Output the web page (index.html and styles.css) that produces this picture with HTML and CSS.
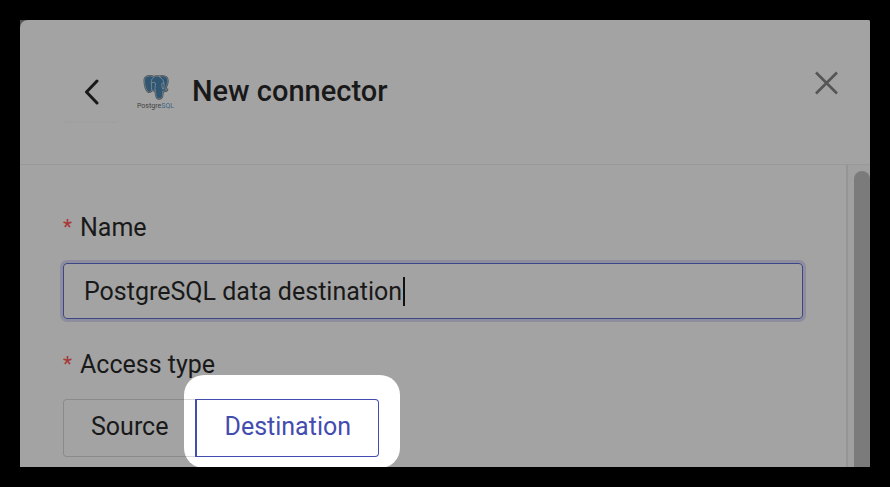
FILE: index.html
```html
<!DOCTYPE html>
<html lang="en">
<head>
<meta charset="utf-8">
<title>New connector</title>
<link rel="stylesheet" href="styles.css">
</head>
<body>
<main class="panel">
  <header class="header">
    <button class="back" type="button" aria-label="Back">
      <svg width="16" height="26" viewBox="0 0 16 26" fill="none" stroke="currentColor" stroke-width="3" stroke-linecap="round" stroke-linejoin="round"><path d="M14 2 3.500 13 14 24"/></svg>
    </button>
    <svg class="logo" width="40" height="36" viewBox="0 0 40 36" role="img" aria-label="PostgreSQL">
      <path d="M18 3C14 1 9 2 8.500 6c0 5 1.500 10 4 12 1.500.5 2.500-1 3.500-2 1 .7 2 .8 3.500.5.3 3 0 7 2.300 8 3 .7 4.700-1 4.700-4l.3-3.500c2 .3 4.200-.1 4.500-1.500l-2.500-.3C31 12 33 6 30.500 3.500 28 1.300 25 1.800 23 2.500 21 2 19.500 2 18 3z" stroke="#4a4c4e" stroke-width="2" stroke-linejoin="round"/>
      <path d="M18 3C14 1 9 2 8.500 6c0 5 1.500 10 4 12 1.500.5 2.500-1 3.500-2 1 .7 2 .8 3.500.5.3 3 0 7 2.300 8 3 .7 4.700-1 4.700-4l.3-3.500c2 .3 4.200-.1 4.500-1.500l-2.500-.3C31 12 33 6 30.500 3.500 28 1.300 25 1.800 23 2.500 21 2 19.500 2 18 3z" fill="#2f5672" stroke="#8a9296" stroke-width=".6"/>
      <path d="M18 3c-3 2-3 5-2.500 8 .4 2-.5 4 .5 5M15.500 9c2-1.200 4-1 4 1 0 2.500-1 4-.3 6M23 2.500c3 1.500 4.700 4 5 7-1.500-.8-2.500-.3-2.400 1 .2 2 .8 3.500 1.300 5M28 9.500c.5 2.500-.2 4-.8 5.500" fill="none" stroke="#8a9296" stroke-width=".8"/>
      <text class="logo-text" x="1" y="34" fill="#414141">Postgre<tspan fill="#3f6480">SQL</tspan></text>
    </svg>
    <h1 class="title">New connector</h1>
    <button class="close" type="button" aria-label="Close">
      <svg width="24" height="24" viewBox="0 0 24 24" fill="none" stroke="currentColor" stroke-width="2.600"><path d="m2 1.500 21 21m0-21-21 21"/></svg>
    </button>
  </header>
  <div class="content">
    <form class="form">
      <label class="label" for="name"><span class="required">*</span>Name</label>
      <div class="field">
        <input class="input" id="name" type="text" value="PostgreSQL data destination">
        <span class="caret"></span>
      </div>
      <div class="label" id="access"><span class="required">*</span>Access type</div>
      <div class="choices" role="group" aria-labelledby="access">
        <button class="choice" type="button">Source</button>
        <div class="highlight"><button class="choice selected" type="button" aria-pressed="true">Destination</button></div>
      </div>
    </form>
    <div class="scrollbar"><div class="thumb"></div></div>
  </div>
</main>
</body>
</html>
```
FILE: styles.css
```css
* {
  box-sizing: border-box;
}

body {
  margin: 0;
  padding: 20px;
  background: #000;
  color: #191919;
  font: 25px/32px Roboto, sans-serif;
}

button,
input {
  margin: 0;
  font: inherit;
  color: inherit;
}

.panel {
  display: flex;
  flex-direction: column;
  height: calc(100vh - 40px);
  overflow: hidden;
  background: #555;
}

.header {
  display: flex;
  flex: none;
  align-items: center;
  height: 145px;
  padding: 0 32px 0 43px;
  border-bottom: 1px solid #999;
  border-radius: 8px 2px 0 0;
  background: #a3a3a3;
}

.back {
  display: flex;
  align-items: center;
  justify-content: center;
  width: 56px;
  height: 58px;
  padding: 0;
  border: 0;
  border-radius: 4px;
  background: transparent;
  box-shadow: 0 2px 0 #a0a0a0;
}

.logo {
  margin: 0 16px 0 17px;
}

.logo-text {
  font: 7px Roboto, sans-serif;
}

.title {
  flex: 1;
  margin: 0;
  padding-bottom: 2px;
  font-size: 29px;
  font-weight: 500;
}

.close {
  display: flex;
  padding: 0;
  margin-bottom: 18px;
  border: 0;
  background: transparent;
  color: #555;
}

.content {
  display: flex;
  flex: 1;
  min-height: 0;
  background: #a3a3a3;
}

.form {
  flex: 1;
  padding: 47px 43px 0;
}

.label {
  display: flex;
  position: relative;
  z-index: 1;
}

.required {
  width: 17px;
  color: #a63a38;
  font-size: 20px;
  font-weight: 500;
  line-height: 30px;
}

.field {
  position: relative;
  margin: 19px 0 30px;
}

.input {
  display: block;
  width: 100%;
  height: 56px;
  padding: 0 20px;
  border: 1px solid #3d4687;
  border-radius: 4px;
  outline: 0;
  background: transparent;
  box-shadow: 0 0 0 3px #8d8d9d;
}

.caret {
  position: absolute;
  top: 14px;
  left: 340px;
  width: 2px;
  height: 29px;
  background: #111;
}

.choices {
  display: flex;
  margin-top: 18px;
}

.choice {
  position: relative;
  z-index: 1;
  height: 58px;
  padding: 0 27px 2px;
  border: 1px solid rgba(0, 0, 0, .15);
  border-right: 0;
  border-radius: 4px 0 0 4px;
  background: transparent;
}

.highlight {
  position: relative;
}

.highlight::before {
  content: "";
  position: absolute;
  inset: -24px -21px -11px -11px;
  border-radius: 20px;
  background: #fff;
}

.selected {
  border: 1px solid #434caf;
  border-left-width: 2px;
  border-radius: 0 4px 4px 0;
  color: #434caf;
}

.scrollbar {
  display: flex;
  width: 24px;
  padding: 6px 0 0 6px;
  border-left: 2px solid #959595;
  background: #a0a0a0;
}

.thumb {
  flex: 1;
  border-radius: 8px 8px 0 0;
  background: #7b7b7b;
}
```
